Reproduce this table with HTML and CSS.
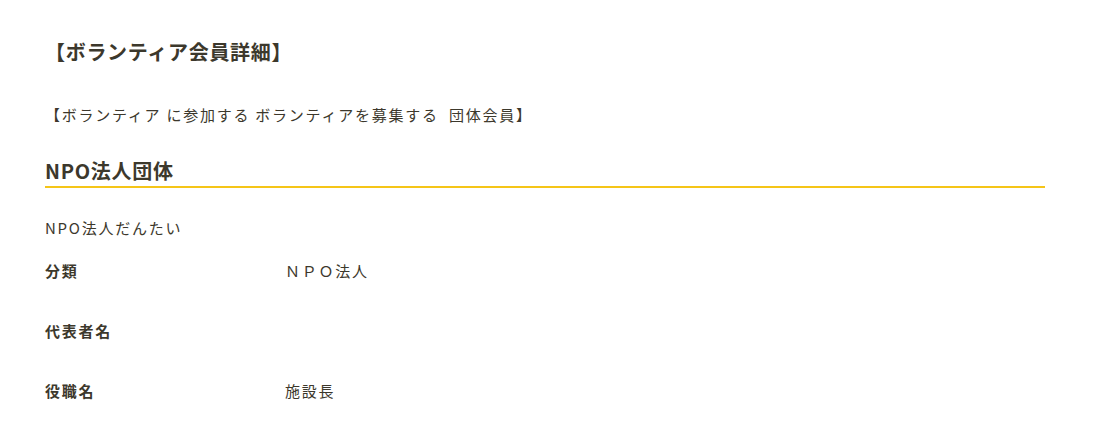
FILE: index.html
```html
<!DOCTYPE html>
<html lang="ja">
<head>
<meta charset="utf-8">
<link rel="stylesheet" href="styles.css">
</head>
<body>
<div class="page">
  <h1 class="title">【ボランティア会員詳細】</h1>
  <p class="kind">【ボランティア に参加する ボランティアを募集する&nbsp; 団体会員】</p>
  <h2 class="org">NPO法人団体</h2>
  <p class="kana">NPO法人だんたい</p>
  <dl class="details">
    <div class="row"><dt>分類</dt><dd>ＮＰＯ法人</dd></div>
    <div class="row"><dt>代表者名</dt><dd></dd></div>
    <div class="row"><dt>役職名</dt><dd>施設長</dd></div>
  </dl>
</div>
</body>
</html>
```

FILE: styles.css
```css
html, body {
  margin: 0;
  padding: 0;
  background: #ffffff;
}
body {
  font-family: "Noto Sans CJK JP", "Noto Sans", sans-serif;
  color: #3c382c;
  font-size: 15px;
  letter-spacing: 1.75px;
}
.page {
  width: 1000px;
  padding: 37px 0 0 45px;
}
.title {
  margin: 0;
  font-size: 20px;
  line-height: 30px;
  font-weight: 700;
  letter-spacing: 0.7px;
}
.kind {
  margin: 34px 0 0 0;
  line-height: 27px;
}
.org {
  margin: 28px 0 0 0;
  font-size: 20px;
  line-height: 30px;
  font-weight: 700;
  letter-spacing: 0.7px;
  border-bottom: 2px solid #f5c518;
}
.kana {
  margin: 26px 0 0 0;
  line-height: 27px;
}
.details {
  margin: 0;
}
.row {
  display: grid;
  grid-template-columns: 240px 1fr;
  padding: 16px 0 17px 0;
  line-height: 27px;
}
.row dt {
  font-weight: 700;
}
.row dd {
  margin: 0;
}
```
